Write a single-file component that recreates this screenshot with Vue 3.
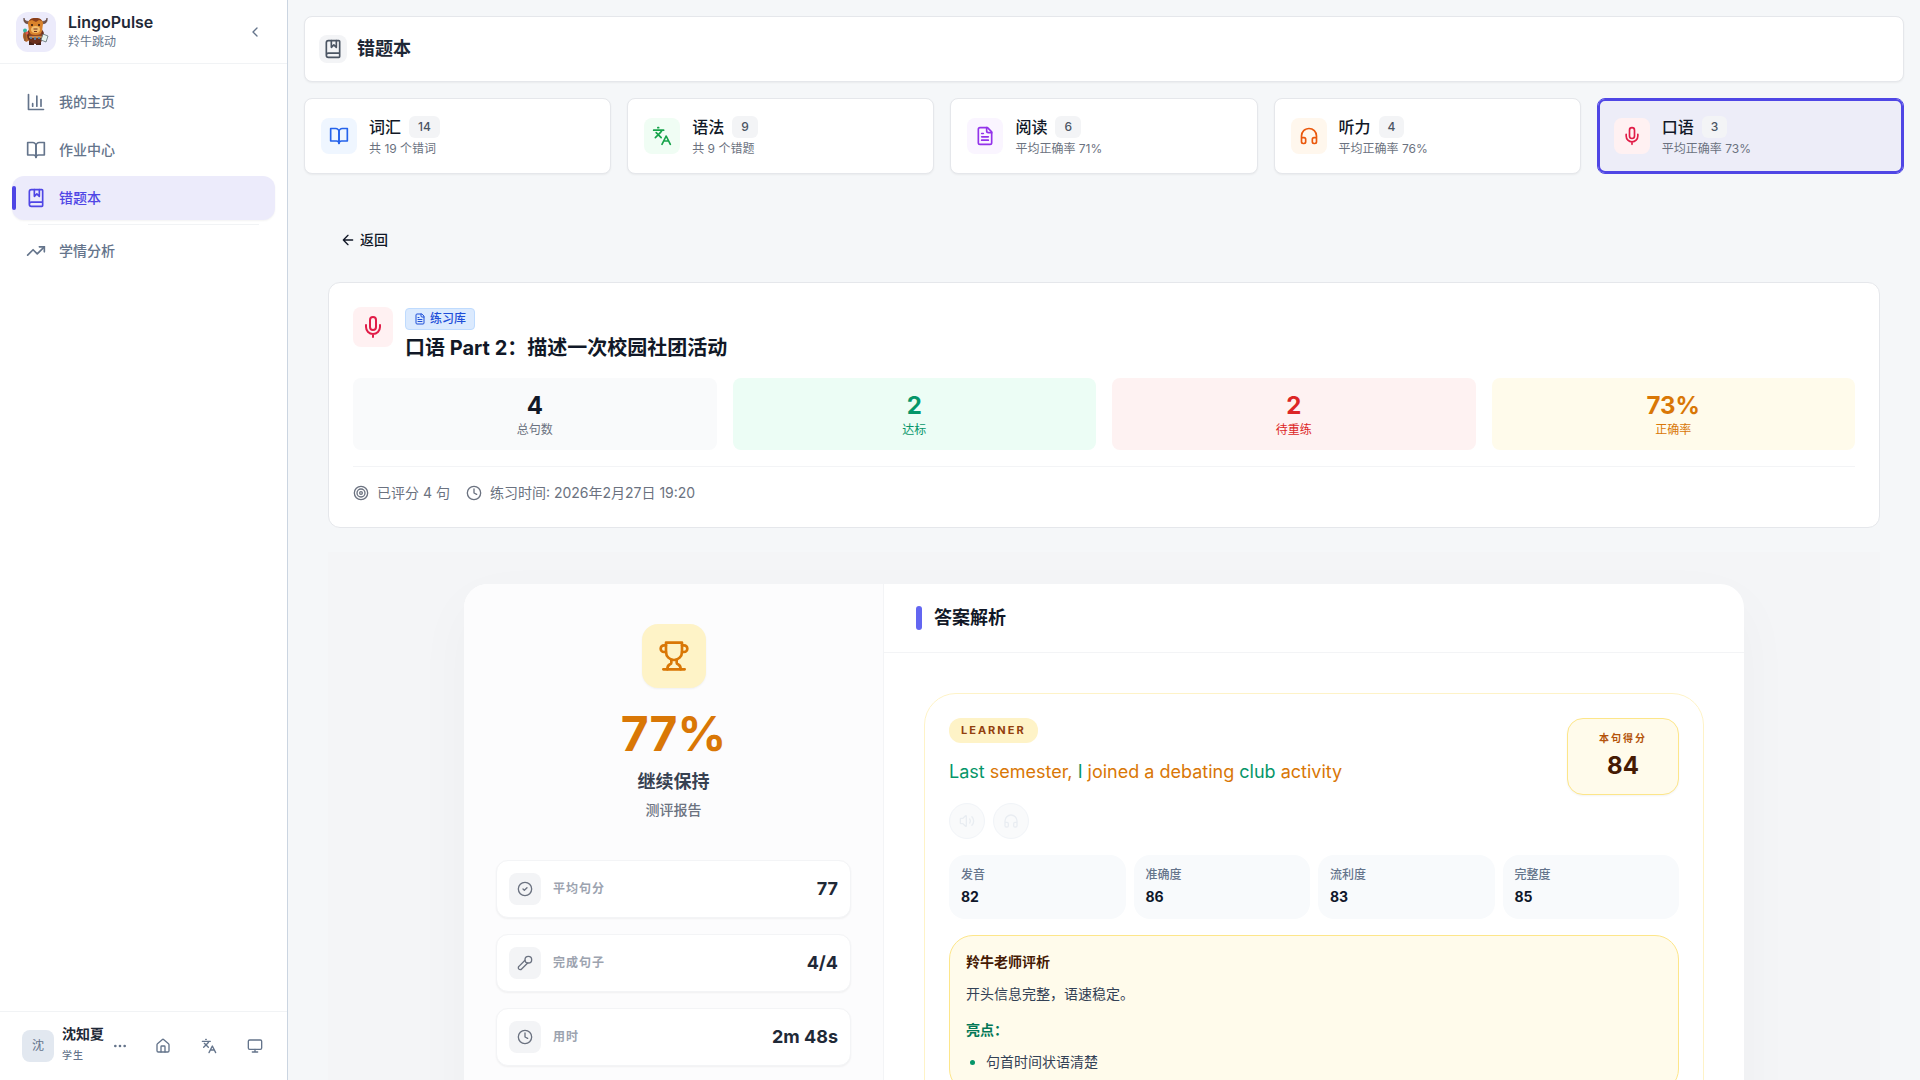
<template>
  <div class="layout">
    <aside class="sidebar">
      <div class="brand">
        <span class="brand-logo">
          <svg viewBox="0 0 40 40" width="40" height="40" aria-hidden="true">
            <path d="M13 33h5v-4h-5zM20 33h5v-4h-5z" fill="#4a2318" />
            <path d="M8 20c-2 3-1 8 2 10l4-2v-8z" fill="#b9662a" />
            <ellipse cx="19.500" cy="23" rx="8.500" ry="9" fill="#6b2f1d" />
            <path d="M14 18h11l1 6-6 3-7-3z" fill="#8e4523" />
            <path d="M14 11C10 13 7 10 8 6c.3 3 3 4 7 3zM25 11c4 2 7-1 6-5-.3 3-3 4-7 3z" fill="#7b5546" stroke="#4e342b" stroke-width=".6" />
            <path d="M12 12c0-4 3-6 7.500-6s7.500 2 7.500 6l-1 7c-1 3-3 4-6.500 4S14 22 13 19z" fill="#d9822b" />
            <path d="M13 9c2-3 4-3 6.500-3s5 0 6.500 3l-3-1-3 2-4-2z" fill="#8a3f1c" />
            <ellipse cx="19.500" cy="17.500" rx="4.500" ry="3.500" fill="#f3bd6c" />
            <circle cx="16" cy="13" r="1" fill="#2b1510" />
            <circle cx="23" cy="13" r="1" fill="#2b1510" />
            <path d="M17.500 17h4M18 19.500h3" stroke="#6b2f1d" />
            <path d="M13 25h13" stroke="#d79a55" stroke-width="1.600" />
            <path d="M15 25v2M19 25v3M23 25v2" stroke="#4f88b8" stroke-width="1.600" />
            <path d="M9 19v10" stroke="#8c5a32" stroke-width="1.500" />
            <circle cx="9" cy="18.500" r="2" fill="#37b6a3" />
            <circle cx="11" cy="21" r="1.500" fill="#e2574c" />
            <path d="m27 22 5 2-2 6-5-2z" fill="#e6f3ee" stroke="#5f6f73" stroke-width=".8" />
          </svg>
        </span>
        <div class="brand-text">
          <strong>LingoPulse</strong>
          <span>羚牛跳动</span>
        </div>
        <button class="icon-btn collapse" type="button" aria-label="收起侧边栏"><Icon name="chevronLeft" :size="16" /></button>
      </div>

      <nav class="nav">
        <template v-for="item in navItems" :key="item.label">
          <hr v-if="item.divider" class="nav-divider">
          <a href="#" :class="['nav-link', { active: item.active }]">
            <Icon :name="item.icon" :size="20" />
            <span>{{ item.label }}</span>
          </a>
        </template>
      </nav>

      <div class="sidebar-footer">
        <button class="user" type="button">
          <span class="avatar">沈</span>
          <span class="user-text">
            <strong>沈知夏</strong>
            <small>学生</small>
          </span>
          <Icon name="more" :size="16" />
        </button>
        <div class="footer-actions">
          <button v-for="action in footerActions" :key="action.icon" class="icon-btn" type="button" :aria-label="action.label">
            <Icon :name="action.icon" :size="16" />
          </button>
        </div>
      </div>
    </aside>

    <main class="main">
      <header class="page-header">
        <span class="page-icon"><Icon name="bookMarked" :size="20" /></span>
        <h1>错题本</h1>
      </header>

      <div class="categories">
        <button v-for="cat in categories" :key="cat.title" type="button" :class="['category', { selected: cat.selected }]">
          <span :class="['category-icon', cat.tone]"><Icon :name="cat.icon" :size="20" /></span>
          <span class="category-text">
            <span class="category-title">{{ cat.title }} <span class="count">{{ cat.count }}</span></span>
            <span class="category-sub">{{ cat.sub }}</span>
          </span>
        </button>
      </div>

      <div class="content">
        <button class="back" type="button"><Icon name="arrowLeft" :size="16" />返回</button>

        <section class="summary">
          <div class="summary-head">
            <span class="summary-icon"><Icon name="mic" :size="24" /></span>
            <div>
              <span class="tag"><Icon name="fileText" :size="12" />练习库</span>
              <h2>口语 Part 2：描述一次校园社团活动</h2>
            </div>
          </div>
          <div class="stats">
            <div v-for="stat in stats" :key="stat.label" :class="['stat', stat.tone]">
              <strong>{{ stat.value }}</strong>
              <span>{{ stat.label }}</span>
            </div>
          </div>
          <div class="meta">
            <span><Icon name="target" :size="16" />已评分 4 句</span>
            <span><Icon name="clock" :size="16" />练习时间: 2026年2月27日 19:20</span>
          </div>
        </section>

        <section class="report-area">
          <div class="report">
            <div class="overview">
              <span class="trophy"><Icon name="trophy" :size="32" /></span>
              <div class="overall">77%</div>
              <div class="verdict">继续保持</div>
              <div class="report-label">测评报告</div>
              <ul class="figures">
                <li v-for="fig in figures" :key="fig.label">
                  <span class="figure-icon"><Icon :name="fig.icon" :size="16" /></span>
                  <span class="figure-label">{{ fig.label }}</span>
                  <strong>{{ fig.value }}</strong>
                </li>
              </ul>
            </div>

            <div class="analysis">
              <div class="analysis-head"><h3>答案解析</h3></div>
              <div class="analysis-body">
                <article class="sentence">
                  <div class="sentence-top">
                    <div>
                      <span class="role">LEARNER</span>
                      <p class="words">
                        <template v-for="(word, i) in words" :key="i"><span :class="word.level">{{ word.text }}</span>{{ ' ' }}</template>
                      </p>
                      <div class="players">
                        <button type="button" disabled aria-label="播放录音"><Icon name="volume" :size="16" /></button>
                        <button type="button" disabled aria-label="播放示范"><Icon name="headphones" :size="16" /></button>
                      </div>
                    </div>
                    <div class="score">
                      <span>本句得分</span>
                      <strong>84</strong>
                    </div>
                  </div>

                  <div class="metrics">
                    <div v-for="m in metrics" :key="m.label" class="metric">
                      <span>{{ m.label }}</span>
                      <strong>{{ m.value }}</strong>
                    </div>
                  </div>

                  <div class="feedback">
                    <h4>羚牛老师评析</h4>
                    <p>开头信息完整，语速稳定。</p>
                    <h5>亮点：</h5>
                    <ul>
                      <li>句首时间状语清楚</li>
                    </ul>
                  </div>
                </article>
              </div>
            </div>
          </div>
        </section>
      </div>
    </main>
  </div>
</template>

<script setup>
import { h } from 'vue'

const icons = {
  chevronLeft: '<path d="m15 18-6-6 6-6"/>',
  arrowLeft: '<path d="m12 19-7-7 7-7M19 12H5"/>',
  chart: '<path d="M3 3v18h18M18 17V9M13 17V5M8 17v-3"/>',
  bookOpen: '<path d="M2 3h6a4 4 0 0 1 4 4v14a3 3 0 0 0-3-3H2z"/><path d="M22 3h-6a4 4 0 0 0-4 4v14a3 3 0 0 1 3-3h7z"/>',
  bookMarked: '<path d="M10 2v8l3-3 3 3V2"/><path d="M4 19.500v-15A2.500 2.500 0 0 1 6.500 2H19a1 1 0 0 1 1 1v18a1 1 0 0 1-1 1H6.500a1 1 0 0 1 0-5H20"/>',
  trending: '<path d="m22 7-8.500 8.500-5-5L2 17"/><path d="M16 7h6v6"/>',
  more: '<circle cx="12" cy="12" r="1"/><circle cx="19" cy="12" r="1"/><circle cx="5" cy="12" r="1"/>',
  home: '<path d="M15 21v-8a1 1 0 0 0-1-1h-4a1 1 0 0 0-1 1v8"/><path d="M3 10a2 2 0 0 1 .709-1.528l7-5.999a2 2 0 0 1 2.582 0l7 5.999A2 2 0 0 1 21 10v9a2 2 0 0 1-2 2H5a2 2 0 0 1-2-2z"/>',
  languages: '<path d="m5 8 6 6M4 14l6-6 2-3M2 5h12M7 2h1M22 22l-5-10-5 10M14 18h6"/>',
  monitor: '<rect width="20" height="14" x="2" y="3" rx="2"/><path d="M8 21h8M12 17v4"/>',
  fileText: '<path d="M15 2H6a2 2 0 0 0-2 2v16a2 2 0 0 0 2 2h12a2 2 0 0 0 2-2V7Z"/><path d="M14 2v4a2 2 0 0 0 2 2h4M10 9H8M16 13H8M16 17H8"/>',
  headphones: '<path d="M3 14h3a2 2 0 0 1 2 2v3a2 2 0 0 1-2 2H5a2 2 0 0 1-2-2v-7a9 9 0 0 1 18 0v7a2 2 0 0 1-2 2h-1a2 2 0 0 1-2-2v-3a2 2 0 0 1 2-2h3"/>',
  mic: '<path d="M12 2a3 3 0 0 0-3 3v7a3 3 0 0 0 6 0V5a3 3 0 0 0-3-3Z"/><path d="M19 10v2a7 7 0 0 1-14 0v-2M12 19v3"/>',
  micHand: '<path d="m12 8-9.040 9.060a2.820 2.820 0 1 0 3.980 3.980L16 12"/><circle cx="17" cy="7" r="5"/>',
  target: '<circle cx="12" cy="12" r="10"/><circle cx="12" cy="12" r="6"/><circle cx="12" cy="12" r="2"/>',
  clock: '<circle cx="12" cy="12" r="10"/><path d="M12 6v6l4 2"/>',
  check: '<circle cx="12" cy="12" r="10"/><path d="m9 12 2 2 4-4"/>',
  trophy: '<path d="M6 9H4.500a2.500 2.500 0 0 1 0-5H6M18 9h1.500a2.500 2.500 0 0 0 0-5H18M4 22h16"/><path d="M10 14.660V17c0 .55-.47.98-.97 1.210C7.850 18.750 7 20.240 7 22M14 14.660V17c0 .55.47.98.97 1.210C16.150 18.750 17 20.240 17 22"/><path d="M18 2H6v7a6 6 0 0 0 12 0V2Z"/>',
  volume: '<path d="M11 4.702a.705.705 0 0 0-1.203-.498L6.413 7.587A1.400 1.400 0 0 1 5.416 8H3a1 1 0 0 0-1 1v6a1 1 0 0 0 1 1h2.416a1.400 1.400 0 0 1 .997.413l3.383 3.384A.705.705 0 0 0 11 19.298z"/><path d="M16 9a5 5 0 0 1 0 6M19.364 18.364a9 9 0 0 0 0-12.728"/>'
}

const Icon = ({ name, size }) => h('svg', {
  class: 'icon',
  width: size,
  height: size,
  viewBox: '0 0 24 24',
  fill: 'none',
  stroke: 'currentColor',
  'stroke-width': 2,
  'stroke-linecap': 'round',
  'stroke-linejoin': 'round',
  'aria-hidden': 'true',
  innerHTML: icons[name]
})
Icon.props = ['name', 'size']

const navItems = [
  { label: '我的主页', icon: 'chart' },
  { label: '作业中心', icon: 'bookOpen' },
  { label: '错题本', icon: 'bookMarked', active: true },
  { label: '学情分析', icon: 'trending', divider: true }
]

const footerActions = [
  { icon: 'home', label: '首页' },
  { icon: 'languages', label: '切换语言' },
  { icon: 'monitor', label: '主题' }
]

const categories = [
  { title: '词汇', count: 14, sub: '共 19 个错词', icon: 'bookOpen', tone: 'blue' },
  { title: '语法', count: 9, sub: '共 9 个错题', icon: 'languages', tone: 'green' },
  { title: '阅读', count: 6, sub: '平均正确率 71%', icon: 'fileText', tone: 'purple' },
  { title: '听力', count: 4, sub: '平均正确率 76%', icon: 'headphones', tone: 'orange' },
  { title: '口语', count: 3, sub: '平均正确率 73%', icon: 'mic', tone: 'red', selected: true }
]

const stats = [
  { value: '4', label: '总句数', tone: 'total' },
  { value: '2', label: '达标', tone: 'pass' },
  { value: '2', label: '待重练', tone: 'retry' },
  { value: '73%', label: '正确率', tone: 'rate' }
]

const figures = [
  { icon: 'check', label: '平均句分', value: '77' },
  { icon: 'micHand', label: '完成句子', value: '4/4' },
  { icon: 'clock', label: '用时', value: '2m 48s' }
]

const words = [
  { text: 'Last', level: 'good' },
  { text: 'semester,', level: 'fair' },
  { text: 'I', level: 'good' },
  { text: 'joined', level: 'fair' },
  { text: 'a', level: 'fair' },
  { text: 'debating', level: 'fair' },
  { text: 'club', level: 'good' },
  { text: 'activity', level: 'fair' }
]

const metrics = [
  { label: '发音', value: 82 },
  { label: '准确度', value: 86 },
  { label: '流利度', value: 83 },
  { label: '完整度', value: 85 }
]
</script>

<style>
body{ background:#f5f7f9; }
</style>

<style scoped>
.layout, .layout *{ box-sizing:border-box; }
.layout{
  display:flex; height:100vh; overflow:hidden;
  font-family: Inter, "Noto Sans CJK SC", sans-serif;
  font-size:14px; line-height:20px; color:#111827;
}
h1, h2, h3, h4, h5, p, ul{ margin:0; padding:0; }
ul{ list-style:none; }
button{ font:inherit; color:inherit; border:0; background:none; padding:0; cursor:pointer; }
.icon{ display:block; flex:none; }

/* Barra lateral */
.sidebar{
  width:288px; flex:none; display:flex; flex-direction:column;
  background:#fff; border-right:1px solid #cbd5e1; color:#64748b;
}
.brand{
  height:64px; flex:none; display:flex; align-items:center; gap:12px;
  padding:0 16px; border-bottom:1px solid #f1f3f5;
}
.brand-logo{ width:40px; height:40px; border-radius:12px; background:#ecebfb; }
.brand-text{ flex:1; display:flex; flex-direction:column; }
.brand-text strong{ font-size:16px; font-weight:600; color:#1f2937; }
.brand-text span{ font-size:12px; }
.icon-btn{ flex:1; height:32px; display:flex; align-items:center; justify-content:center; }
.collapse{ flex:none; width:32px; }

.nav{ flex:1; display:flex; flex-direction:column; gap:4px; padding:16px 12px; }
.nav-link{
  position:relative; height:44px; display:flex; align-items:center; gap:13px;
  padding:0 14px; border-radius:12px; color:inherit; font-weight:500; text-decoration:none;
}
.nav-link.active{ background:#ecebfb; color:#4f46e5; box-shadow:0 1px 2px rgba(0,0,0,.05); }
.nav-link.active::before{
  content:""; position:absolute; left:0; top:10px; width:4px; height:24px;
  border-radius:2px; background:#4f46e5;
}
.nav-divider{ width:calc(100% - 32px); height:1px; margin:0 auto; border:0; background:#f1f3f5; }

.sidebar-footer{
  height:69px; flex:none; display:flex; align-items:center;
  padding:0 9px 0 22px; border-top:1px solid #f1f3f5;
}
.user{ display:flex; align-items:center; gap:8px; text-align:left; }
.avatar{
  width:32px; height:32px; border-radius:8px; background:#e2e8f0;
  display:flex; align-items:center; justify-content:center; font-size:12px;
}
.user-text{ display:flex; flex-direction:column; padding-bottom:2px; }
.user-text strong{ font-weight:600; color:#1f2937; }
.user-text small{ font-size:10px; line-height:22px; font-weight:500; letter-spacing:1px; }
.footer-actions{ flex:1; display:flex; margin-left:12px; }

/* Contenido */
.main{ flex:1; min-width:0; padding:16px; overflow-y:auto; scrollbar-width:none; background:#f5f7f9; }
.page-header{
  height:66px; display:flex; align-items:center; gap:10px; padding:0 14px;
  background:#fff; border:1px solid #e5e7eb; border-radius:8px; box-shadow:0 1px 2px rgba(0,0,0,.05);
}
.page-icon{
  width:28px; height:28px; border-radius:8px; background:#f3f4f6; color:#4b5563;
  display:flex; align-items:center; justify-content:center;
}
h1{ font-size:18px; line-height:28px; font-weight:600; color:#1f2937; }

.categories{ display:grid; grid-template-columns:repeat(5, 1fr); gap:16px; margin-top:16px; }
.category{
  display:flex; align-items:center; gap:12px; padding:16px; text-align:left;
  background:#fff; border:1px solid #e5e7eb; border-radius:8px; box-shadow:0 1px 2px rgba(0,0,0,.05);
}
.category.selected{ background:#ededf8; border-color:#4f46e5; box-shadow:inset 0 0 0 2px #4f46e5; }
.category-icon{
  width:36px; height:36px; border-radius:8px;
  display:flex; align-items:center; justify-content:center;
}
.blue{ background:#eff6ff; color:#2563eb; }
.green{ background:#f0fdf4; color:#16a34a; }
.purple{ background:#faf5ff; color:#9333ea; }
.orange{ background:#fff7ed; color:#ea580c; }
.red{ background:#fff1f2; color:#e11d48; }
.category-text{ display:flex; flex-direction:column; gap:2px; }
.category-title{ display:flex; align-items:center; gap:8px; font-size:16px; line-height:24px; font-weight:500; }
.count{
  padding:3px 9px; border-radius:6px; background:#f3f4f6; color:#4b5563;
  font-size:12px; line-height:16px;
}
.category-sub{ font-size:12px; line-height:16px; color:#6b7280; }

.content{ padding:50px 24px 24px; }
.back{ height:32px; display:flex; align-items:center; gap:4px; padding:0 12px; font-weight:500; }

.summary{
  margin-top:26px; padding:24px; background:#fff;
  border:1px solid #e5e7eb; border-radius:12px;
}
.summary-head{ display:flex; gap:12px; }
.summary-icon{
  width:40px; height:40px; border-radius:8px; background:#fff1f2; color:#e11d48;
  display:flex; align-items:center; justify-content:center;
}
.tag{
  display:flex; align-items:center; gap:4px; width:max-content; height:22px; margin:1px 0 4px; padding:0 8px;
  background:#dbeafe; border:1px solid #bfdbfe; border-radius:4px; color:#1d4ed8;
  font-size:12px; font-weight:500;
}
h2{ font-size:20px; line-height:28px; font-weight:700; }
.stats{ display:grid; grid-template-columns:repeat(4, 1fr); gap:16px; margin-top:16px; }
.stat{ padding:12px; border-radius:8px; text-align:center; }
.stat strong{ display:block; font-size:24px; line-height:32px; }
.stat span{ display:block; font-size:12px; line-height:16px; }
.total{ background:#f9fafb; }
.total span{ color:#6b7280; }
.pass{ background:#ecfdf5; color:#059669; }
.retry{ background:#fef2f2; color:#dc2626; }
.rate{ background:#fffbeb; color:#d97706; }
.meta{
  display:flex; gap:16px; margin-top:16px; padding-top:16px;
  border-top:1px solid #f3f4f6; color:#6b7280;
}
.meta span{ display:flex; align-items:center; gap:8px; }

.report-area{ margin-top:24px; padding:32px; overflow:hidden; background:#f4f5f7; }
.report{
  display:flex; max-width:1280px; min-height:640px; margin:0 auto; overflow:hidden;
  background:#fff; border-radius:24px; box-shadow:0 20px 60px rgba(0,0,0,.03);
}
.overview{
  width:420px; flex:none; display:flex; flex-direction:column; align-items:center;
  padding:40px 32px; background:#fcfcfd; border-right:1px solid #f3f4f6;
}
.trophy{
  width:64px; height:64px; border-radius:16px; background:#fef3c7; color:#d97706;
  display:flex; align-items:center; justify-content:center; box-shadow:0 1px 2px rgba(0,0,0,.05);
}
.overall{ margin-top:22px; font-size:48px; line-height:48px; font-weight:700; color:#d97706; }
.verdict{ margin-top:10px; font-size:18px; line-height:28px; font-weight:700; color:#374151; }
.report-label{ margin-top:4px; color:#6b7280; font-weight:500; }
.figures{ align-self:stretch; display:grid; gap:16px; margin-top:40px; }
.figures li{
  height:58px; display:flex; align-items:center; gap:12px; padding:0 12px;
  background:#fff; border:1px solid #f3f4f6; border-radius:12px; box-shadow:0 1px 2px rgba(0,0,0,.05);
}
.figure-icon{
  width:32px; height:32px; border-radius:8px; background:#f3f4f6; color:#6b7280;
  display:flex; align-items:center; justify-content:center;
}
.figure-label{ flex:1; font-size:12px; font-weight:700; letter-spacing:1px; color:#9ca3af; }
.figures strong{ font-size:18px; color:#1f2937; }

.analysis{ flex:1; min-width:0; }
.analysis-head{ padding:20px 32px; border-bottom:1px solid #f3f4f6; }
h3{ display:flex; align-items:center; gap:12px; font-size:18px; line-height:28px; font-weight:700; }
h3::before{ content:""; width:6px; height:24px; border-radius:3px; background:#6366f1; }
.analysis-body{ padding:40px; }
.sentence{ padding:24px; border:1px solid #fef3c7; border-radius:32px; }
.sentence-top{ display:flex; justify-content:space-between; align-items:flex-start; }
.role{
  display:block; width:max-content; padding:0 12px; border-radius:12px; background:#fef3c7; color:#92400e;
  font-size:11px; line-height:25px; font-weight:700; letter-spacing:2px;
}
.words{ margin:12px 0 14px; font-size:18px; line-height:34px; }
.good{ color:#059669; }
.fair{ color:#d97706; }
.players{ display:flex; gap:8px; }
.players button{
  width:36px; height:36px; border:1px solid #f1f4f8; border-radius:50%; background:#f9fafb; color:#e9edf2;
  display:flex; align-items:center; justify-content:center; cursor:default;
}
.score{
  width:112px; padding:12px; text-align:center; background:#fffbeb;
  border:1px solid #fde68a; border-radius:16px; box-shadow:0 1px 2px rgba(0,0,0,.05);
}
.score span{ display:block; font-size:10px; line-height:15px; font-weight:700; letter-spacing:2px; color:#b45309; }
.score strong{ display:block; margin-top:4px; font-size:24px; line-height:32px; color:#451a03; }
.metrics{ display:grid; grid-template-columns:repeat(4, 1fr); gap:8px; margin-top:16px; }
.metric{ padding:12px; border-radius:16px; background:#f8fafc; }
.metric span{ display:block; font-size:12px; line-height:16px; font-weight:500; color:#64748b; }
.metric strong{ display:block; margin-top:4px; color:#0f172a; }
.feedback{
  margin-top:16px; padding:16px; background:#fffbeb; border:1px solid #fde68a; border-radius:24px;
  line-height:28px; color:#334155;
}
h4{ font-size:14px; line-height:20px; color:#451a03; }
.feedback p{ margin-top:8px; }
h5{ margin-top:12px; font-size:14px; line-height:20px; color:#047857; }
.feedback ul{ margin-top:8px; padding-left:20px; list-style:disc; }
.feedback li::marker{ color:#059669; }
</style>
